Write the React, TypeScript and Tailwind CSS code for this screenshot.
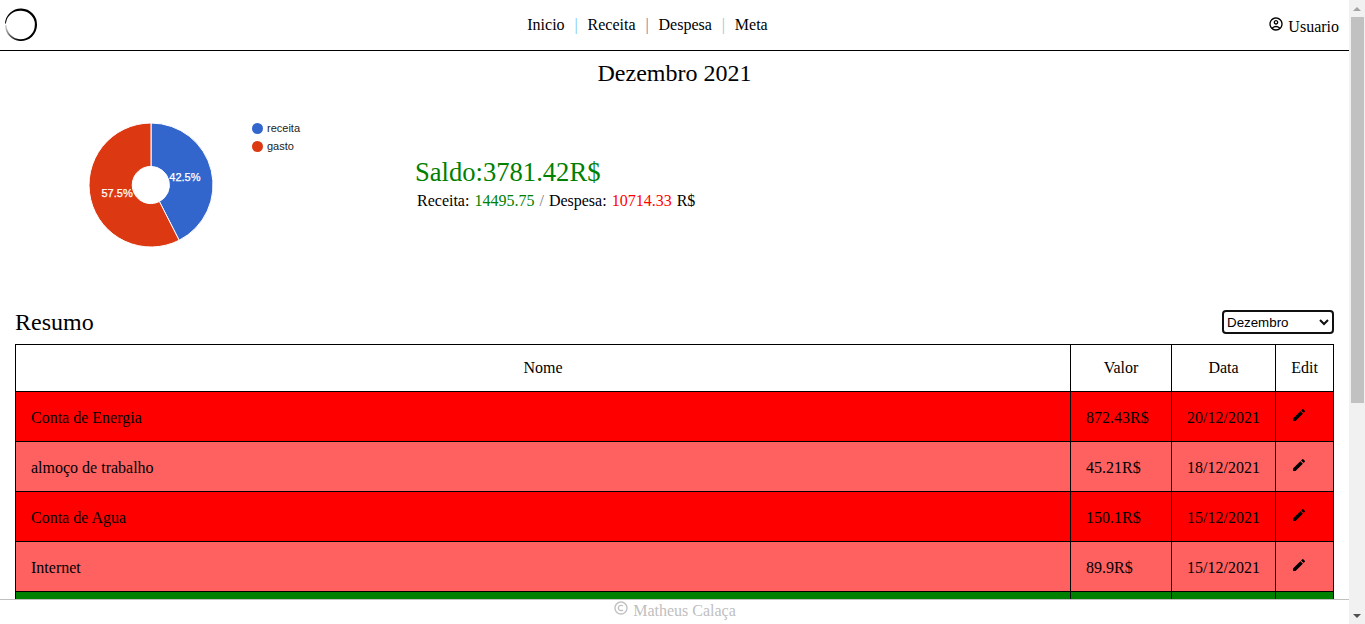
import { BiCopyright } from "react-icons/bi";
import { MdModeEdit, MdOutlineAccountCircle } from "react-icons/md";

const rows = [
  ["Conta de Energia", "872.43R$", "20/12/2021", "bg-[#ff0000]"],
  ["almoço de trabalho", "45.21R$", "18/12/2021", "bg-[#ff6060]"],
  ["Conta de Agua", "150.1R$", "15/12/2021", "bg-[#ff0000]"],
  ["Internet", "89.9R$", "15/12/2021", "bg-[#ff6060]"],
  ["", "", "", "bg-[#008000]"],
];

const cols = "grid grid-cols-[1055px_101px_104px_58px]";

function Logo() {
  return (
    <svg width="34" height="34" viewBox="0 0 34 34">
      <defs>
        <linearGradient id="ring" gradientUnits="userSpaceOnUse" x1="1" y1="18" x2="15" y2="33">
          <stop offset="0" stopColor="#000" stopOpacity="0.15" />
          <stop offset="0.5" stopColor="#000" stopOpacity="0.6" />
          <stop offset="1" stopColor="#000" />
        </linearGradient>
      </defs>
      <path d="M1 16A16 16 0 0 1 33 17A16 16 0 0 1 16 33V31.2A14.2 14.2 0 0 0 30.8 17A14.4 13.2 0 0 0 2 15Z" fill="#000" />
      <path d="M16 33A16 16 0 0 1 1 17L2.6 17A14.2 14.2 0 0 0 16 31.2Z" fill="url(#ring)" />
    </svg>
  );
}

function Chart() {
  return (
    <svg className="block" width="400" height="200" viewBox="0 0 400 200" fontFamily="Liberation Sans, Arial, sans-serif" fontSize="11">
      <g stroke="#fff" strokeWidth="1">
        <path d="M151 23A62 62 0 0 1 179.14 140.25L159.4 101.5A18.6 18.6 0 0 0 151 66.4Z" fill="#3366cc" />
        <path d="M179.14 140.25A62 62 0 1 1 151 23V66.4A18.6 18.6 0 1 0 159.4 101.5Z" fill="#dc3912" />
      </g>
      <g fill="#fff" stroke="#fff" strokeWidth="0.25">
        <text x="169.3" y="81">42.5%</text>
        <text x="101.5" y="97">57.5%</text>
      </g>
      <circle cx="257.5" cy="28.5" r="5.5" fill="#3366cc" />
      <circle cx="257.5" cy="46.5" r="5.5" fill="#dc3912" />
      <text x="267" y="32" fill="#222">receita</text>
      <text x="267" y="50" fill="#222">gasto</text>
    </svg>
  );
}

export default function App() {
  return (
    <div className="flex h-[624px] w-[1365px] overflow-hidden bg-white font-['Liberation_Serif',serif] text-base leading-[18px] text-black">
      <div className="flex w-[1349px] flex-col">
        <header className="grid h-[51px] shrink-0 grid-cols-[1fr_auto_1fr] border-b border-black">
          <div className="pt-2 pl-1"><Logo /></div>
          <nav className="flex gap-[9.9px] pt-4 pr-[54px]">
            <span>Inicio</span><span className="text-[#7cc4f5]">|</span>
            <span>Receita</span><span className="text-[#777799]">|</span>
            <span>Despesa</span><span className="text-[#91c5dc]">|</span>
            <span>Meta</span>
          </nav>
          <div className="flex justify-end gap-1 pt-4 pr-[10px]">
            <MdOutlineAccountCircle size={16} />
            <span className="pt-[2px]">Usuario</span>
          </div>
        </header>
        <main className="flex h-[548px] shrink-0 flex-col overflow-hidden">
          <h1 className="h-[49px] shrink-0 pt-[9px] text-center text-2xl leading-[27px]">Dezembro 2021</h1>
          <section className="flex h-[200px] shrink-0">
            <Chart />
            <div className="pt-[57px] pl-[15px]">
              <p className="text-[26.6px] leading-[31px] text-[#008000]">Saldo:3781.42R$</p>
              <p className="pt-[4px] pl-[2px] [word-spacing:1px]">
                Receita: <span className="text-[#008000]">14495.75</span> <span className="text-[#777]">/</span> Despesa: <span className="text-[#ff0000]">10714.33</span> R$
              </p>
            </div>
          </section>
          <div className="flex h-[44px] shrink-0 items-start justify-between pr-[15px] pl-[15px]">
            <h2 className="pt-[9px] text-2xl leading-[27px]">Resumo</h2>
            <button className="mt-[10px] flex h-6 w-[112px] items-center justify-between rounded-[4px] border-2 border-[#101010] pr-[3px] pl-[3px] font-['Liberation_Sans',sans-serif] text-[13.33px] leading-none">
              <span className="pt-[2px]">Dezembro</span>
              <svg width="10" height="7" viewBox="0 0 10 7" fill="none" stroke="#101010" strokeWidth="2"><path d="M1 1l4 4 4-4" /></svg>
            </button>
          </div>
          <div className="mx-[15px] w-[1319px] shrink-0 border-t border-l border-black">
            <div className={cols + " h-[47px] text-center"}>
              {["Nome", "Valor", "Data", "Edit"].map((t) => (
                <div key={t} className="border-r border-b border-black pt-[14px]">{t}</div>
              ))}
            </div>
            {rows.map(([name, value, date, color], i) => (
              <div key={i} className={cols + " h-[50px] " + color}>
                {[name, value, date].map((t, j) => (
                  <div key={j} className="border-r border-b border-black pt-[17px] pl-[15px]">{t}</div>
                ))}
                <div className="border-r border-b border-black pt-[15px] pl-[15px]"><MdModeEdit size={16} /></div>
              </div>
            ))}
          </div>
        </main>
        <footer className="flex h-[25px] shrink-0 justify-center gap-1 border-t border-[#c0c0c0] text-[#c0c0c0]">
          <BiCopyright size={16} />
          <span className="pt-[2px]">Matheus Calaça</span>
        </footer>
      </div>
      <aside className="flex w-4 flex-col items-center justify-between bg-[#f1f1f1]">
        <svg width="16" height="17" viewBox="0 0 16 17"><path d="M4 11l4-4 4 4z" fill="#a3a3a3" /></svg>
        <div className="mb-auto h-[386px] w-[13px] bg-[#c1c1c1]" />
        <svg width="16" height="17" viewBox="0 0 16 17"><path d="M4 7l4 4 4-4z" fill="#505050" /></svg>
      </aside>
    </div>
  );
}
